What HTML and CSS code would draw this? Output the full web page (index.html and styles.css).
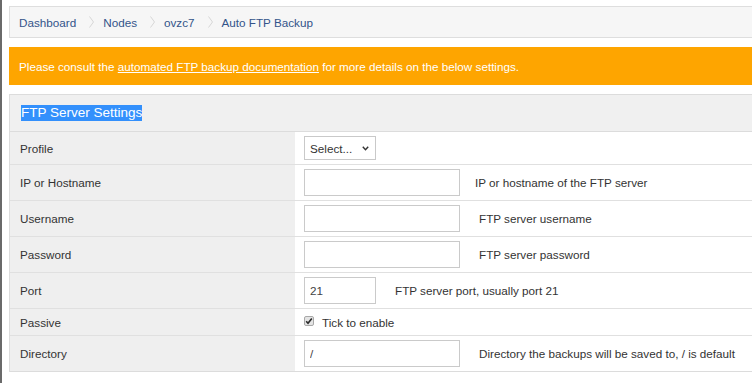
FILE: index.html
```html
<!DOCTYPE html>
<html lang="en">
<head>
<meta charset="utf-8">
<title>Auto FTP Backup</title>
<link rel="stylesheet" href="styles.css">
</head>
<body>
<div class="frame">
  <nav class="crumbs">
    <a class="crumb" href="#">Dashboard</a>
    <svg class="sep" width="5" height="12" viewBox="0 0 5 12"><polyline points="0.5,0.5 4.5,6 0.5,11.5" fill="none" stroke="#d6d6d6" stroke-width="1"/></svg>
    <a class="crumb" href="#">Nodes</a>
    <svg class="sep" width="5" height="12" viewBox="0 0 5 12"><polyline points="0.5,0.5 4.5,6 0.5,11.5" fill="none" stroke="#d6d6d6" stroke-width="1"/></svg>
    <a class="crumb" href="#">ovzc7</a>
    <svg class="sep" width="5" height="12" viewBox="0 0 5 12"><polyline points="0.5,0.5 4.5,6 0.5,11.5" fill="none" stroke="#d6d6d6" stroke-width="1"/></svg>
    <span class="crumb current">Auto FTP Backup</span>
  </nav>

  <div class="alert">Please consult the&nbsp;<a href="#">automated FTP backup documentation</a>&nbsp;for more details on the below settings.</div>

  <section class="panel">
    <div class="panel-head"><span class="sel">FTP Server Settings</span></div>

    <div class="row first">
      <div class="label">Profile</div>
      <div class="field">
        <div class="select-wrap">
          <select class="select"><option>Select...</option></select>
          <svg class="caret" width="7" height="5" viewBox="0 0 7 5"><polyline points="0.8,0.8 3.5,3.8 6.2,0.8" fill="none" stroke="#333" stroke-width="1.4"/></svg>
        </div>
      </div>
    </div>

    <div class="row">
      <div class="label">IP or Hostname</div>
      <div class="field"><input class="input" type="text"><span class="help help-ip">IP or hostname of the FTP server</span></div>
    </div>

    <div class="row">
      <div class="label">Username</div>
      <div class="field"><input class="input" type="text"><span class="help">FTP server username</span></div>
    </div>

    <div class="row">
      <div class="label">Password</div>
      <div class="field"><input class="input" type="password"><span class="help">FTP server password</span></div>
    </div>

    <div class="row">
      <div class="label">Port</div>
      <div class="field"><input class="input short" type="text" value="21"><span class="help">FTP server port, usually port 21</span></div>
    </div>

    <div class="row">
      <div class="label">Passive</div>
      <div class="field check-field">
        <span class="checkbox"><svg width="8" height="8" viewBox="0 0 8 8"><polyline points="1.2,4.2 3,6.2 6.8,1.4" fill="none" stroke="#2b2b2b" stroke-width="1.6"/></svg></span>
        <span class="check-label">Tick to enable</span>
      </div>
    </div>

    <div class="row">
      <div class="label">Directory</div>
      <div class="field"><input class="input" type="text" value="/"><span class="help">Directory the backups will be saved to, / is default</span></div>
    </div>
  </section>
</div>
</body>
</html>
```

FILE: styles.css
```css
html, body {
  margin: 0;
  padding: 0;
  background: #fff;
  overflow: hidden;
}

body {
  font-family: "Liberation Sans", Arial, sans-serif;
  font-size: 11.7px;
  color: #333;
}

.frame {
  border-left: 2px solid #6a6a6a;
  padding: 6px 0 0 7px;
  min-height: 100vh;
  box-sizing: border-box;
}

.crumbs {
  display: flex;
  align-items: center;
  height: 30px;
  padding: 0 0 0 9px;
  background: #f6f6f6;
  border: 1px solid #dedede;
  border-right: 0;
}

.crumb {
  color: #33548a;
  text-decoration: none;
}

.sep {
  margin: 0 9px 0 13px;
  display: block;
}

.alert {
  margin-top: 9px;
  height: 38px;
  display: flex;
  align-items: center;
  padding-left: 10px;
  background: #fea500;
  color: #fff;
}

.alert a {
  color: #fff;
  text-decoration: underline;
}

.panel {
  margin-top: 9px;
  border: 1px solid #dcdcdc;
  border-right: 0;
}

.panel-head {
  height: 36px;
  display: flex;
  align-items: center;
  padding-left: 11px;
  background: #f0f0f0;
  border-bottom: 1px solid #dcdcdc;
  font-size: 13.5px;
}

.sel {
  background: #3390fc;
  color: #fff;
  line-height: 16px;
}

.row {
  display: flex;
  border-top: 1px solid #e0e0e0;
}

.row.first {
  border-top: 0;
}

.label {
  width: 275px;
  flex: none;
  padding-left: 10px;
  background: #efefef;
  display: flex;
  align-items: center;
}

.field {
  flex: 1;
  padding: 4px 9px;
  display: flex;
  align-items: center;
}

.select-wrap {
  position: relative;
  width: 72px;
  height: 24px;
}

.select {
  appearance: none;
  -webkit-appearance: none;
  width: 72px;
  height: 24px;
  margin: 0;
  padding: 0 0 0 5px;
  border: 1px solid #c9c9c9;
  border-radius: 0;
  background: #fff;
  font-family: inherit;
  font-size: 11.7px;
  color: #333;
}

.caret {
  position: absolute;
  right: 7px;
  top: 10px;
}

.input {
  box-sizing: border-box;
  width: 156px;
  height: 27px;
  margin: 0;
  padding: 0 5px;
  border: 1px solid #cacaca;
  border-radius: 0;
  font-family: inherit;
  font-size: 11.7px;
  color: #444;
  background: #fff;
}

.input.short {
  width: 72px;
}

.help {
  margin-left: 19px;
}

.help-ip {
  margin-left: 15px;
}

.check-field {
  height: 18px;
}

.checkbox {
  box-sizing: border-box;
  width: 10px;
  height: 10px;
  border: 1px solid #a8a8a8;
  border-radius: 2px;
  background: #e4e4e4;
  display: flex;
  align-items: center;
  justify-content: center;
  margin-top: -2px;
}

.checkbox svg {
  display: block;
}

.check-label {
  margin-left: 8px;
}
```
